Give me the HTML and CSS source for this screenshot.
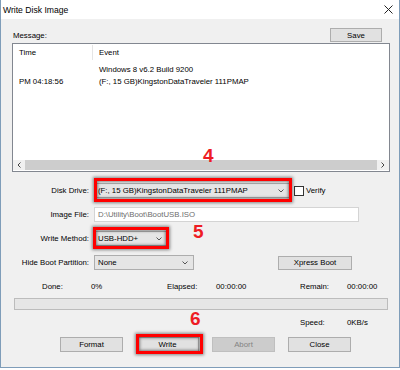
FILE: index.html
```html
<!DOCTYPE html>
<html lang="en">
<head>
  <meta charset="UTF-8">
  <title>Write Disk Image</title>
  <link rel="stylesheet" href="styles.css">
</head>
<body>
  <div class="window">
    <div class="titlebar">
      <span class="title">Write Disk Image</span>
      <svg class="close" width="9" height="9" viewBox="0 0 9 9">
        <path d="M0.5 0.5 L8.5 8.5 M8.5 0.5 L0.5 8.5" stroke="#222" stroke-width="1" fill="none"/>
      </svg>
    </div>

    <div class="content">
      <div class="msg-head">
        <span>Message:</span>
        <button class="btn save">Save</button>
      </div>

      <div class="log">
        <div class="log-head">
          <span class="col-time">Time</span>
          <span class="col-event">Event</span>
        </div>
        <div class="row">
          <span class="col-time"></span>
          <span class="col-event">Windows 8 v6.2 Build 9200</span>
        </div>
        <div class="row">
          <span class="col-time">PM 04:18:56</span>
          <span class="col-event">(F:, 15 GB)KingstonDataTraveler 111PMAP</span>
        </div>
        <div class="log-spacer"></div>
        <div class="hscroll">
          <span class="arrow">
            <svg width="4" height="6" viewBox="0 0 4 6"><path d="M3.5 0.5 L1 3 L3.5 5.5" stroke="#444" fill="none"/></svg>
          </span>
          <span class="thumb"></span>
          <span class="arrow">
            <svg width="4" height="6" viewBox="0 0 4 6"><path d="M0.5 0.5 L3 3 L0.5 5.5" stroke="#444" fill="none"/></svg>
          </span>
        </div>
      </div>

      <div class="form">
        <span class="label">Disk Drive:</span>
        <div class="field">
          <div class="combo combo-drive marked mark-drive">
            <span>(F:, 15 GB)KingstonDataTraveler 111PMAP</span>
            <svg class="chevron" width="6" height="4" viewBox="0 0 6 4"><path d="M0.5 0.5 L3 3 L5.5 0.5" stroke="#555" fill="none"/></svg>
          </div>
          <span class="checkbox"></span>
          <span class="check-label">Verify</span>
        </div>

        <span class="label">Image File:</span>
        <div class="field">
          <div class="textbox">D:\Utility\Boot\BootUSB.ISO</div>
        </div>

        <span class="label">Write Method:</span>
        <div class="field">
          <div class="combo combo-method marked mark-method">
            <span>USB-HDD+</span>
            <svg class="chevron" width="6" height="4" viewBox="0 0 6 4"><path d="M0.5 0.5 L3 3 L5.5 0.5" stroke="#555" fill="none"/></svg>
          </div>
        </div>

        <span class="label">Hide Boot Partition:</span>
        <div class="field">
          <div class="combo combo-hide">
            <span>None</span>
            <svg class="chevron" width="6" height="4" viewBox="0 0 6 4"><path d="M0.5 0.5 L3 3 L5.5 0.5" stroke="#555" fill="none"/></svg>
          </div>
          <button class="btn xpress">Xpress Boot</button>
        </div>
      </div>

      <div class="stats">
        <span>Done:</span>
        <span>0%</span>
        <span>Elapsed:</span>
        <span>00:00:00</span>
        <span>Remain:</span>
        <span>00:00:00</span>
      </div>

      <div class="progress"></div>

      <div class="stats speed">
        <span class="speed-label">Speed:</span>
        <span>0KB/s</span>
      </div>

      <div class="actions">
        <button class="btn">Format</button>
        <button class="btn marked mark-write">Write</button>
        <button class="btn" disabled>Abort</button>
        <button class="btn">Close</button>
      </div>
    </div>

    <span class="step step-4">4</span>
    <span class="step step-5">5</span>
    <span class="step step-6">6</span>
  </div>
</body>
</html>
```

FILE: styles.css
```css
:root {
  --face: #f0f0f0;
  --btn: #e1e1e1;
  --btn-border: #adadad;
  --mark: #ff0000;
  --step: #ee1c24;
}

* {
  margin: 0;
  padding: 0;
  box-sizing: border-box;
}

body {
  font-family: "Liberation Sans", Arial, sans-serif;
  font-size: 7.8px;
  color: #000;
  background: #fff;
}

.window {
  position: relative;
  width: 400px;
  height: 368px;
  background: var(--face);
  border: 1px solid #7f9db9;
  border-top: none;
  display: flex;
  flex-direction: column;
}

.titlebar {
  height: 19px;
  background: #fff;
  display: flex;
  align-items: center;
  justify-content: space-between;
  padding: 0 6px 0 2px;
}

.title {
  font-size: 8.6px;
}

.content {
  flex: 1;
  padding: 9px 9px 0 11px;
}

/* message list */

.msg-head {
  height: 14px;
  display: flex;
  align-items: center;
  justify-content: space-between;
  padding-left: 1px;
}

.btn {
  width: 63px;
  height: 15px;
  background: var(--btn);
  border: 1px solid var(--btn-border);
  font: inherit;
  color: #000;
}

.btn:disabled {
  background: #cccccc;
  border-color: #bfbfbf;
  color: #838383;
}

.save {
  width: 52px;
  height: 14px;
  margin-right: 8px;
}

.log {
  margin-top: 1px;
  height: 129px;
  background: #fff;
  border: 1px solid #828790;
  display: flex;
  flex-direction: column;
}

.log-head {
  height: 19px;
  display: flex;
}

.log-head span {
  display: flex;
  align-items: center;
  margin: 1px 0 3px;
}

.log-head .col-time {
  border-right: 1px solid #e5e5e5;
}

.row {
  height: 12px;
  display: flex;
  align-items: center;
}

.col-time {
  width: 80px;
  padding-left: 6px;
}

.col-event {
  padding-left: 6px;
}

.log-spacer {
  flex: 1;
}

.hscroll {
  height: 10px;
  margin-bottom: 1px;
  display: flex;
  background: var(--face);
}

.hscroll .arrow {
  width: 12px;
  display: flex;
  align-items: center;
  justify-content: center;
}

.thumb {
  flex: 1;
  background: #cdcdcd;
}

/* settings */

.form {
  margin-top: 11px;
  display: grid;
  grid-template-columns: 77px auto;
  grid-auto-rows: 15px;
  column-gap: 5px;
  row-gap: 9px;
  align-items: center;
}

.label {
  text-align: right;
}

.field {
  display: flex;
  align-items: center;
  height: 15px;
}

.combo {
  height: 15px;
  background: #e5e5e5;
  border: 1px solid var(--btn-border);
  display: flex;
  align-items: center;
  justify-content: space-between;
  padding: 0 5px 0 3px;
}

.combo-drive {
  width: 196px;
}

.combo-method {
  width: 74px;
}

.combo-hide {
  width: 100px;
}

.checkbox {
  width: 10px;
  height: 10px;
  margin-left: 4px;
  background: #fff;
  border: 1px solid #333;
}

.check-label {
  margin-left: 2px;
}

.textbox {
  width: 265px;
  height: 15px;
  background: #fff;
  border: 1px solid #d4d4d4;
  color: #6d6d6d;
  padding-left: 3px;
  display: flex;
  align-items: center;
}

.xpress {
  width: 74px;
  height: 14px;
  margin-left: 84px;
}

/* progress */

.stats {
  height: 12px;
  margin-top: 10px;
  padding-left: 30px;
  display: grid;
  grid-template-columns: 49px 76px 49px 84px 47px auto;
  align-items: center;
}

.speed {
  margin-top: 6px;
}

.speed-label {
  grid-column: 5;
}

.progress {
  height: 12px;
  margin: 6px 2px 0;
  background: #e6e6e6;
  border: 1px solid #bcbcbc;
}

.actions {
  margin-top: 9px;
  padding-left: 48px;
  display: flex;
  gap: 13px;
}

/* red annotations */

.marked {
  position: relative;
}

.marked::after {
  content: '';
  position: absolute;
  border: 3px solid var(--mark);
  box-shadow: 0 0 3px 1px rgba(0, 0, 0, 0.45), inset 0 0 3px 1px rgba(0, 0, 0, 0.45);
}

.mark-drive::after {
  inset: -6px -3px -5px -1px;
}

.mark-method::after {
  inset: -5px -2px -4px -2px;
}

.mark-write::after {
  inset: -4px -5px -3px -1px;
}

.step {
  position: absolute;
  font-size: 19px;
  line-height: 1;
  font-weight: bold;
  color: var(--step);
}

.step-4 {
  left: 202px;
  top: 146px;
}

.step-5 {
  left: 192px;
  top: 222px;
}

.step-6 {
  left: 189px;
  top: 309px;
}
```
